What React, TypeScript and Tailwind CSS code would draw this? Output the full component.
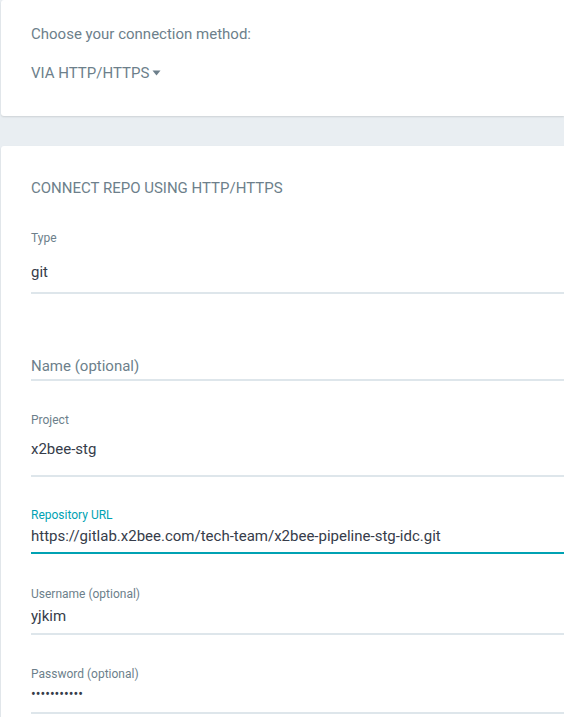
import React from "react";

function Field({
  label,
  value,
  focused,
  gap,
  pb,
  top,
  dots,
}: {
  label: string;
  value: string;
  focused?: boolean;
  gap: string;
  pb: string;
  top: string;
  dots?: boolean;
}) {
  return (
    <div className={top}>
      <div className={`text-[12px] leading-4 ${focused ? "text-[#00a2b3]" : "text-[#6d7f8b]"}`}>{label}</div>
      <div
        className={`${gap} ${pb} border-b-2 leading-5 text-[#363c4a] ${
          focused ? "border-[#00a2b3]" : "border-[#dee6eb]"
        } ${dots ? "text-[14px]" : "text-[15px]"}`}
      >
        {value}
      </div>
    </div>
  );
}

export default function App() {
  return (
    <div className="h-[717px] w-[564px] overflow-hidden bg-[#e9eef2] pl-px font-['Roboto',sans-serif]">
      <section className="h-[116px] rounded-l-[3px] bg-white pl-[30px] pt-6 shadow-[0_1px_2px_rgba(0,0,0,0.12)]">
        <p className="text-[15px] leading-5 text-[#6d7f8b]">Choose your connection method:</p>
        <div className="mt-[19px] flex items-center gap-[3px] text-[15px] leading-5 text-[#6d7f8b]">
          <span>VIA HTTP/HTTPS</span>
          <svg width="9" height="6" viewBox="0 0 9 6">
            <path d="M0.5 0.5 L8.5 0.5 L4.5 5.5 Z" fill="#6d7f8b" />
          </svg>
        </div>
      </section>

      <section className="mt-[30px] rounded-l-[3px] bg-white pl-[30px] pt-8 pb-8 shadow-[0_1px_2px_rgba(0,0,0,0.12)]">
        <p className="text-[15px] leading-5 text-[#6d7f8b]">CONNECT REPO USING HTTP/HTTPS</p>

        <Field top="mt-8" label="Type" value="git" gap="mt-4" pb="pb-[10px]" />

        <div className="mt-[62px] border-b-2 border-[#dee6eb] pb-[3px] text-[15px] leading-5 text-[#6d7f8b]">
          Name (optional)
        </div>

        <Field top="mt-[31px]" label="Project" value="x2bee-stg" gap="mt-[11px]" pb="pb-4" />
        <Field
          top="mt-[30px]"
          label="Repository URL"
          value="https://gitlab.x2bee.com/tech-team/x2bee-pipeline-stg-idc.git"
          focused
          gap="mt-[3px]"
          pb="pb-[6px]"
        />
        <Field top="mt-8" label="Username (optional)" value="yjkim" gap="mt-1" pb="pb-[7px]" />
        <Field
          top="mt-[31px]"
          label="Password (optional)"
          value="•••••••••••"
          dots
          gap="mt-[2px]"
          pb="pb-2"
        />
      </section>
    </div>
  );
}
